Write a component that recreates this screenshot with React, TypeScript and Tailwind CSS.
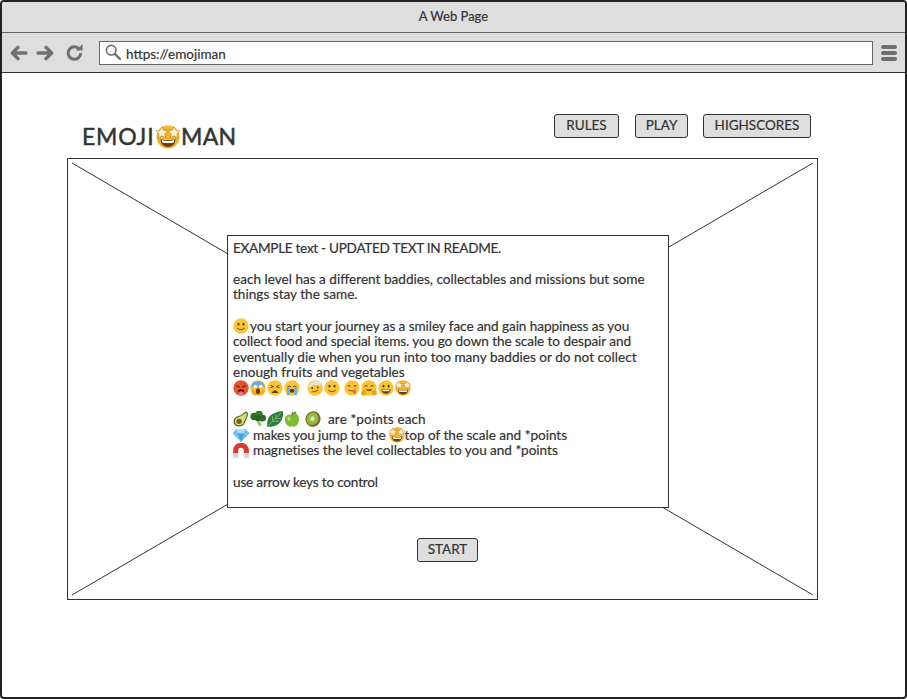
import React from "react";

const F = "font-['Lato','Liberation_Sans',sans-serif]";
const W = "[-webkit-text-stroke:0.2px_#333]";

function Face({ fill = "#fbc531", children, top }: { fill?: string; children?: React.ReactNode; top?: string }) {
  return (
    <>
      <circle cx="8" cy="8" r="7.2" fill={fill} />
      {top && <path d="M1.2 6.5A7.2 7.2 0 0 1 14.8 6.5Z" fill={top} />}
      {children}
    </>
  );
}

function Star({ cx, cy, r = 2.6 }: { cx: number; cy: number; r?: number }) {
  const pts = Array.from({ length: 10 }, (_, i) => {
    const a = -Math.PI / 2 + (i * Math.PI) / 5;
    const q = i % 2 ? r * 0.5 : r;
    return `${cx + q * Math.cos(a)},${cy + q * Math.sin(a)}`;
  }).join(" ");
  return <polygon points={pts} fill="#f7eccb" stroke="#a8781a" strokeWidth="0.35" />;
}

const Eyes = () => (
  <>
    <ellipse cx="5.6" cy="6.3" rx="0.9" ry="1.3" fill="#5a3b12" />
    <ellipse cx="10.4" cy="6.3" rx="0.9" ry="1.3" fill="#5a3b12" />
  </>
);
const Smile = () => <path d="M4.6 10.2Q8 12.8 11.4 10.2" fill="none" stroke="#7a4d10" strokeWidth="0.9" strokeLinecap="round" />;

const art: Record<string, React.ReactNode> = {
  star: (
    <Face fill="#f5b32a">
      <path d="M3.2 9.4Q8 10.8 12.8 9.4Q12.2 14.2 8 14.2Q3.8 14.2 3.2 9.4Z" fill="#6b3e10" />
      <path d="M4 9.9Q8 11 12 9.9L11.6 11.4Q8 12.2 4.4 11.4Z" fill="#fff" />
      <Star cx={4.2} cy={5.4} r={4} />
      <Star cx={11.8} cy={5.4} r={4} />
    </Face>
  ),
  smile: <Face fill="#fcc737"><Eyes /><Smile /></Face>,
  hot: (
    <Face fill="#e8532f">
      <path d="M3.8 6l2.6 1M12.2 6L9.6 7" stroke="#5b1a10" strokeWidth="1" strokeLinecap="round" />
      <path d="M5 10Q8 8.5 11 10Q10.5 13 8 13Q5.5 13 5 10Z" fill="#5b1a10" />
      <rect x="6" y="11" width="4" height="4.4" rx="2" fill="#ff6f91" />
    </Face>
  ),
  scream: (
    <Face fill="#fbc02d" top="#6fa8e6">
      <circle cx="5.4" cy="6.4" r="1.5" fill="#fff" />
      <circle cx="10.6" cy="6.4" r="1.5" fill="#fff" />
      <ellipse cx="8" cy="11" rx="1.8" ry="2.8" fill="#5b3410" />
      <path d="M1 11l3 4h2.4L4 9.8ZM15 11l-3 4H9.6L12 9.8Z" fill="#f2a81f" />
    </Face>
  ),
  weary: (
    <Face>
      <path d="M3.8 5.4l2.8 1.4-2.8 1M12.2 5.4L9.4 6.8l2.8 1" fill="none" stroke="#5a3b12" strokeWidth="0.9" />
      <path d="M4.8 12.6Q8 7.4 11.2 12.6Z" fill="#5a3b12" />
    </Face>
  ),
  sob: (
    <Face>
      <path d="M3.8 6.8Q5.4 5.4 7 6.8M9 6.8Q10.6 5.4 12.2 6.8" fill="none" stroke="#5a3b12" strokeWidth="0.9" />
      <path d="M3.4 7.4h2.4v7.4H3.4ZM10.2 7.4h2.4v7.4h-2.4Z" fill="#5ab0f0" />
      <ellipse cx="8" cy="10.6" rx="2.2" ry="1.8" fill="#5a3b12" />
    </Face>
  ),
  bandage: (
    <Face>
      <path d="M1.4 5.6Q8 -1.6 14.6 3.8L12.4 5.8Q7 3.4 2.4 8Z" fill="#e7e3da" />
      <circle cx="5.4" cy="8" r="0.9" fill="#5a3b12" />
      <circle cx="10.6" cy="7.4" r="0.9" fill="#5a3b12" />
      <path d="M5.4 11.6Q8 12.2 10.8 10" fill="none" stroke="#7a4d10" strokeWidth="0.9" strokeLinecap="round" />
    </Face>
  ),
  yum: (
    <Face>
      <path d="M3.8 6.4Q5.2 5 6.6 6.4M9.4 6.4Q10.8 5 12.2 6.4" fill="none" stroke="#5a3b12" strokeWidth="0.9" />
      <path d="M4.4 9.8Q8 12 11.6 9.8" fill="none" stroke="#7a4d10" strokeWidth="0.9" />
      <ellipse cx="10.2" cy="11.6" rx="1.5" ry="1.8" fill="#ec5c80" />
    </Face>
  ),
  hug: (
    <Face>
      <path d="M3.8 6.4Q5.2 5 6.6 6.4M9.4 6.4Q10.8 5 12.2 6.4" fill="none" stroke="#5a3b12" strokeWidth="0.9" />
      <path d="M5 8.6Q8 10 11 8.6Q10.4 10.8 8 10.8Q5.6 10.8 5 8.6Z" fill="#6b3e10" />
      <circle cx="3" cy="12.6" r="2.4" fill="#e9a11f" />
      <circle cx="13" cy="12.6" r="2.4" fill="#e9a11f" />
    </Face>
  ),
  grin: (
    <Face>
      <Eyes />
      <path d="M3.6 9Q8 10.4 12.4 9Q12 13.4 8 13.4Q4 13.4 3.6 9Z" fill="#6b3e10" />
      <path d="M4.4 9.5Q8 10.5 11.6 9.5L11.2 10.8Q8 11.5 4.8 10.8Z" fill="#fff" />
    </Face>
  ),
  avocado: (
    <>
      <path d="M13.6 1.2Q15.6 3.6 13.4 7.4Q12.6 9 11.6 11.8Q10 15.4 5.4 15Q0.8 14.4 1 10Q1.4 6.4 5.6 5.2Q8 4.6 9.8 3Q12 0.6 13.6 1.2Z" fill="#4d6b23" />
      <path d="M12.8 2.2Q14.2 4 12.4 7Q11.6 8.6 10.6 11.2Q9.4 14 5.6 13.8Q2.2 13.2 2.2 10Q2.6 7.2 6 6.2Q8.4 5.6 10.4 3.8Q12 2 12.8 2.2Z" fill="#d6dc7a" />
      <circle cx="6.2" cy="10.2" r="2.5" fill="#8a5526" />
    </>
  ),
  broccoli: (
    <>
      <path d="M6.2 9l2.4-1 3 5.4-2.6 1.6Z" fill="#8fc65a" />
      <circle cx="4.4" cy="5.6" r="3.5" fill="#2f6b2a" />
      <circle cx="9" cy="3.6" r="3.5" fill="#3a7c30" />
      <circle cx="12.4" cy="7.2" r="3.2" fill="#2f6b2a" />
      <circle cx="7.8" cy="7.2" r="2.8" fill="#28602a" />
    </>
  ),
  leafy: (
    <>
      <path d="M0.6 15Q0 6 6 3Q11 0.6 15.8 0.6Q16 8 12 12Q7.6 16 0.6 15Z" fill="#2f7d3a" />
      <path d="M2 14.2Q7 8 13.4 2.8M6 10.2L5.6 5.4M9 7.6L8.8 3.6M6 10.2L11.6 10M9 7.6l4.4-.2" fill="none" stroke="#8fd07a" strokeWidth="0.7" />
    </>
  ),
  apple: (
    <>
      <path d="M8 4.6Q11-0 14 5.2Q16 10 12.4 14.2Q10.4 15.8 8 14.8Q5.6 15.8 3.6 14.2Q0 10 2 5.6Q4.8 2.4 8 4.6Z" fill="#7fbb35" />
      <ellipse cx="5.2" cy="7.6" rx="1.4" ry="2.2" fill="#b4dc70" />
      <path d="M8 5L8.4 1.4" stroke="#5b3d1a" strokeWidth="0.9" />
      <path d="M8.4 3.2Q10 0.6 12.4 1.2Q11.4 3.6 8.4 3.2Z" fill="#3d8a2a" />
    </>
  ),
  kiwi: (
    <>
      <ellipse cx="8" cy="8" rx="7" ry="7.4" fill="#8a6236" transform="rotate(25 8 8)" />
      <ellipse cx="7.4" cy="8" rx="5.4" ry="6" fill="#8ebd3a" transform="rotate(25 8 8)" />
      <ellipse cx="7.4" cy="8" rx="1.9" ry="2.4" fill="#e5ecb8" transform="rotate(25 8 8)" />
    </>
  ),
  gem: (
    <>
      <polygon points="3.6,2.4 12.4,2.4 16,6.4 8,14.6 0,6.4" fill="#6cc1f2" />
      <polygon points="5,6.4 11,6.4 8,14.6" fill="#3f9fe0" />
      <polygon points="3.6,2.4 12.4,2.4 11,6.4 5,6.4" fill="#a6defb" />
    </>
  ),
  magnet: (
    <>
      <path d="M0.6 10V7.6a7.4 7.4 0 0 1 14.8 0V10h-4.8V7.6a2.6 2.6 0 0 0-5.2 0V10Z" fill="#dd3a30" />
      <rect x="0.6" y="10" width="4.8" height="4.4" fill="#cfd3d8" />
      <rect x="10.6" y="10" width="4.8" height="4.4" fill="#cfd3d8" />
    </>
  ),
};

function E({ k, s = 16, className = "" }: { k: string; s?: number; className?: string }) {
  return (
    <svg viewBox="0.5 0.5 15 15" width={s} height={s} className={`inline-block shrink-0 ${className}`}>
      {art[k]}
    </svg>
  );
}

function Btn({ label, w }: { label: string; w: string }) {
  return (
    <button className={`h-6 ${w} flex items-center justify-center rounded-[3px] border border-[#333] bg-[#dedede] pb-px text-[13.5px] text-[#333] ${F} ${W}`}>
      {label}
    </button>
  );
}

function Line({ children, className = "" }: { children?: React.ReactNode; className?: string }) {
  return <div className={`flex h-[15.6px] items-center whitespace-nowrap ${className}`}>{children}</div>;
}

export default function App() {
  return (
    <div className={`flex h-[699px] w-[907px] flex-col overflow-hidden rounded-[4px] border-2 border-[#222] bg-white text-[#333] ${F}`}>
      <div className="flex h-[31px] items-center justify-center border-b border-[#666] bg-[#dedede] text-[13px] [-webkit-text-stroke:0.2px_#333]">A Web Page</div>
      <div className="flex h-[40px] items-center border-b border-[#333] bg-[#dedede] pl-[8px] pr-[8px]">
        <svg viewBox="0 0 18 16" width="18" height="16" className="mr-[8px]">
          <path d="M8 2.4L2.4 8l5.6 5.6M3 8H16" fill="none" stroke="#6f6f6f" strokeWidth="3.4" strokeLinecap="round" strokeLinejoin="round" />
        </svg>
        <svg viewBox="0 0 18 16" width="18" height="16" className="mr-[12px]">
          <path d="M10 2.4L15.6 8 10 13.6M15 8H2" fill="none" stroke="#6f6f6f" strokeWidth="3.4" strokeLinecap="round" strokeLinejoin="round" />
        </svg>
        <svg viewBox="0 0 16 16" width="17" height="17" className="mr-[16px]">
          <path d="M12.4 4.6A5.9 5.9 0 1 0 13.9 8.4" fill="none" stroke="#6f6f6f" strokeWidth="2.8" />
          <path d="M9.2 6.2h6.4V0Z" fill="#6f6f6f" />
        </svg>
        <div className="flex h-[24px] w-[774px] items-center border border-[#666] bg-white pl-[5px] text-[13.5px]">
          <svg viewBox="0 0 16 16" width="16" height="16" className="mr-[5px] -mt-[2px]">
            <circle cx="6.2" cy="6.2" r="4.8" fill="none" stroke="#6f6f6f" strokeWidth="1.6" />
            <path d="M9.8 9.8L15 15" stroke="#6f6f6f" strokeWidth="2.4" strokeLinecap="round" />
          </svg>
          <span className={`pt-[3px] ${W}`}>https://emojiman</span>
        </div>
        <div className="ml-[8px] flex w-[16px] flex-col gap-[2px]">
          <span className="h-[4px] rounded-full bg-[#6f6f6f]" />
          <span className="h-[4px] rounded-full bg-[#6f6f6f]" />
          <span className="h-[4px] rounded-full bg-[#6f6f6f]" />
        </div>
      </div>

      <div className="ml-[65px] flex w-[751px] flex-col pt-[40px]">
        <div className="flex h-[45px] items-start justify-between pl-[15px] pr-[7px]">
          <div className="mt-[9px] flex items-center text-[23px] leading-[29px] tracking-[0.3px] text-[#333] [-webkit-text-stroke:0.5px_#333]">
            <span className="w-[73px] shrink-0 tracking-[0.8px]">EMOJI</span>
            <E k="star" s={24} className="mx-[1px] shrink-0" />
            MAN
          </div>
          <div className="mt-px flex">
            <Btn label="RULES" w="w-[65px]" />
            <div className="ml-[16px]"><Btn label="PLAY" w="w-[53px]" /></div>
            <div className="ml-[15px]"><Btn label="HIGHSCORES" w="w-[108px]" /></div>
          </div>
        </div>

        <div className="relative flex h-[442px] flex-col items-center border border-[#333] pt-[76px]">
          <svg className="absolute inset-0 h-full w-full" viewBox="0 0 749 440" preserveAspectRatio="none">
            <path d="M4 4L745 436M745 4L4 436" stroke="#333" strokeWidth="1" />
          </svg>
          <div className={`relative ml-[11px] h-[273px] w-[442px] border border-[#333] bg-white px-[5px] pt-[4px] text-[13.6px] text-[#333] ${W}`}>
            <Line className="tracking-[-0.3px]">EXAMPLE text - UPDATED TEXT IN README.</Line>
            <Line />
            <Line>each level has a different baddies, collectables and missions but some</Line>
            <Line>things stay the same.</Line>
            <Line />
            <Line className="tracking-[-0.08px]"><E k="smile" className="mr-px" />you start your journey as a smiley face and gain happiness as you</Line>
            <Line className="tracking-[-0.07px]">collect food and special items. you go down the scale to despair and</Line>
            <Line>eventually die when you run into too many baddies or do not collect</Line>
            <Line>enough fruits and vegetables</Line>
            <Line className="gap-[1px]">
              <E k="hot" /><E k="scream" /><E k="weary" /><E k="sob" />
              <E k="bandage" className="ml-[6px]" /><E k="smile" />
              <E k="yum" className="ml-[3px]" /><E k="hug" /><E k="grin" /><E k="star" />
            </Line>
            <Line />
            <Line>
              <E k="avocado" className="mr-px" /><E k="broccoli" className="mr-px" /><E k="leafy" className="mr-px" /><E k="apple" />
              <E k="kiwi" className="ml-[5px]" />
              <span className="ml-[7px] tracking-[0.1px]">are *points each</span>
            </Line>
            <Line><E k="gem" /><span className="ml-[4px] tracking-[-0.12px]">makes you jump to the</span><E k="star" className="ml-[3px]" /><span className="tracking-[-0.03px]">top of the scale and *points</span></Line>
            <Line><E k="magnet" /><span className="ml-[4px] tracking-[-0.04px]">magnetises the level collectables to you and *points</span></Line>
            <Line />
            <Line className="tracking-[-0.2px]">use arrow keys to control</Line>
          </div>
          <div className="relative mt-[30px] ml-[10px]">
            <Btn label="START" w="w-[61px]" />
          </div>
        </div>
      </div>
    </div>
  );
}
